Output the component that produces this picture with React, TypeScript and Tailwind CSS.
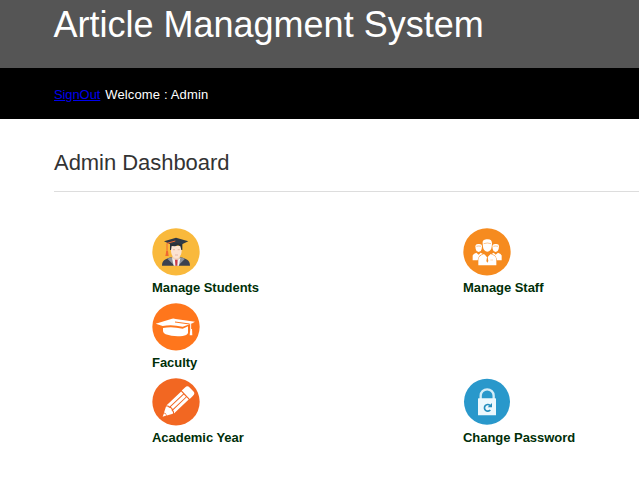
import type { ReactNode } from 'react';

function IconFrame({ color, children, r = 71 }: { color: string; children: ReactNode; r?: number }) {
  return (
    <svg className="block h-12 w-12" viewBox="18 18 144 144">
      <circle cx="90" cy="89.5" r={r} fill={color} />
      {children}
    </svg>
  );
}

function StudentIcon() {
  return (
    <IconFrame color="#f9b93c">
      <path d="M48 131 C48 116 58 110 76 106 L90 118 L104 106 C122 110 132 116 132 131 Z" fill="#3b4150" />
      <path d="M76 106 L64 110 L86 131 H96 L117 110 L104 106 L91 120 Z" fill="#8d929c" />
      <path d="M80 100 H101 V108 L91 119 L79 108 Z" fill="#f2d3bd" />
      <path d="M78 107 L91 117 L103 107 L99 131 H83 Z" fill="#f3f3f3" />
      <path d="M87 113 H95 L94 131 H88 Z" fill="#c93c48" />
      <path d="M75 72 H107 V86 C107 99 99 109 91 109 C83 109 75 99 75 86 Z" fill="#fbe3d2" />
      <path d="M72 63 H109 V84 H106 L103 73 L96 70 L87 73 L77 72 L75 84 H72 Z" fill="#29303a" />
      <path d="M54 58 L90 47 L127 58 L108 67 Q90 61 73 67 Z" fill="#303945" />
      <path d="M81 83 H87 M95 83 H101 M87 99 H96" stroke="#c58b78" strokeWidth="1.5" />
      <path d="M88 57 L63 64 V91" fill="none" stroke="#ef6730" strokeWidth="3" />
      <path d="M61 87 H66 L68 102 H58 Z" fill="#ef6730" />
    </IconFrame>
  );
}

function FacultyIcon() {
  return (
    <IconFrame color="#ff761c">
      <path d="M29 80 L78 65 Q83 63 89 66 L147 74 L139 79 L110 89 Q76 81 50 87 Z" fill="#fff" />
      <path d="M51 93 Q77 87 110 95 L126 88 V108 Q123 115 110 117 Q82 120 59 112 Q52 109 51 103 Z" fill="#fff" />
      <path d="M87 75 L131 81" fill="none" stroke="#ff761c" strokeWidth="3" />
      <path d="M134 80 V97" fill="none" stroke="#fff" strokeWidth="3" />
      <path d="M133 96 H138 L139 115 H131 Z" fill="#fff" />
    </IconFrame>
  );
}

function PencilIcon() {
  return (
    <IconFrame color="#f26722">
      <g transform="translate(50 134) rotate(-43.5)" fill="#fff">
        <path d="M0 0 L10 -5 Q13 0 10 5 Z" />
        <path d="M11.5 -6 L28 -15 Q34 -12 32 -6 Q38 0 32 6 Q34 12 28 15 L11.5 6 Q15 0 11.5 -6 Z" />
        <path d="M31 -16.5 H92 V-7.5 H36 Q37 -13 31 -16.5 Z" />
        <rect x="38" y="-4.5" width="54" height="9" />
        <path d="M31 16.5 H92 V7.5 H36 Q37 13 31 16.5 Z" />
        <path d="M95.5 -17.5 H108 Q119 -17.5 119 -9 V9 Q119 17.5 108 17.5 H95.5 Z" />
      </g>
    </IconFrame>
  );
}

function StaffIcon() {
  return (
    <IconFrame color="#f68b1f">
      <g fill="#fff">
        <path d="M55 72 Q56 65 65 66 Q75 65 75 72 L74 81 Q73 89 65 90 Q57 89 56 81 Z" />
        <path d="M106 72 Q107 65 116 66 Q126 65 126 72 L125 81 Q123 89 116 90 Q108 89 107 81 Z" />
        <path d="M47 115 V101 Q48 95 58 92 L65 98 L71 92 L78 96 Q64 99 62 115 Z" />
        <path d="M134 115 V101 Q133 95 123 92 L116 98 L110 92 L104 96 Q118 99 120 115 Z" />
        <path d="M77 65 Q75 53 88 52 Q105 49 105 65 L104 75 Q102 88 91 89 Q80 88 78 75 Z" />
        <path d="M64 130 V111 Q65 102 81 96 L91 106 L101 96 Q117 101 118 111 V130 Z" />
      </g>
      <path d="M80 65 Q91 61 102 65" fill="none" stroke="#f68b1f" strokeWidth="1.5" />
      <path d="M58 73 Q66 71 72 73 M109 73 Q116 71 123 73" fill="none" stroke="#f68b1f" strokeWidth="1.5" />
      <path d="M88 101 H94 L92 106 L94 117 L91 122 L88 117 L90 106 Z" fill="#f68b1f" />
      <path d="M100 114 H108" stroke="#f68b1f" strokeWidth="1" />
    </IconFrame>
  );
}

function PasswordIcon() {
  return (
    <IconFrame color="#2998cb" r={69}>
      <path d="M71 81 V71 A19.5 19 0 0 1 110 71 V81" fill="none" stroke="#d4edf8" strokeWidth="7" />
      <rect x="63" y="79" width="54" height="51" rx="1" fill="#edf8fd" />
      <path d="M99 100 A10 10 0 1 0 100 114" fill="none" stroke="#258dbd" strokeWidth="5" />
      <path d="M105 93 V106 H92 Z" fill="#258dbd" />
    </IconFrame>
  );
}

function DashboardLink({ icon, label }: { icon: ReactNode; label: string }) {
  return (
    <a className="flex h-[75px] flex-col items-start text-[13px] leading-[15px] font-bold tracking-[-0.04px] whitespace-nowrap text-[#002f08]">
      {icon}
      <span className="mt-1">{label}</span>
    </a>
  );
}

export default function App() {
  return (
    <div className="h-[481px] w-full overflow-hidden bg-white font-['Liberation_Sans',Arial,sans-serif]">
      <header className="h-[68px] bg-[#555] pl-[53.5px] text-white">
        <h1 className="pt-[5px] text-[36px] leading-[40px] whitespace-nowrap">Article Managment System</h1>
      </header>
      <nav className="flex h-[51px] items-center gap-[5px] bg-black pt-[2px] pl-[54px] text-[13px] text-white">
        <a className="tracking-[-0.1px] text-[#0000ee] underline">SignOut</a>
        <span className="tracking-[0.14px]">Welcome : Admin</span>
      </nav>
      <main className="pl-[54px]">
        <h2 className="h-[73px] border-b border-[#ddd] pt-[31px] text-[22px] leading-[26px] tracking-[-0.04px] text-[#333]">Admin Dashboard</h2>
        <section className="grid grid-cols-[311px_1fr] pt-9 pl-[98px]">
          <DashboardLink icon={<StudentIcon />} label="Manage Students" />
          <DashboardLink icon={<StaffIcon />} label="Manage Staff" />
          <DashboardLink icon={<FacultyIcon />} label="Faculty" />
          <span />
          <DashboardLink icon={<PencilIcon />} label="Academic Year" />
          <DashboardLink icon={<PasswordIcon />} label="Change Password" />
        </section>
      </main>
    </div>
  );
}
